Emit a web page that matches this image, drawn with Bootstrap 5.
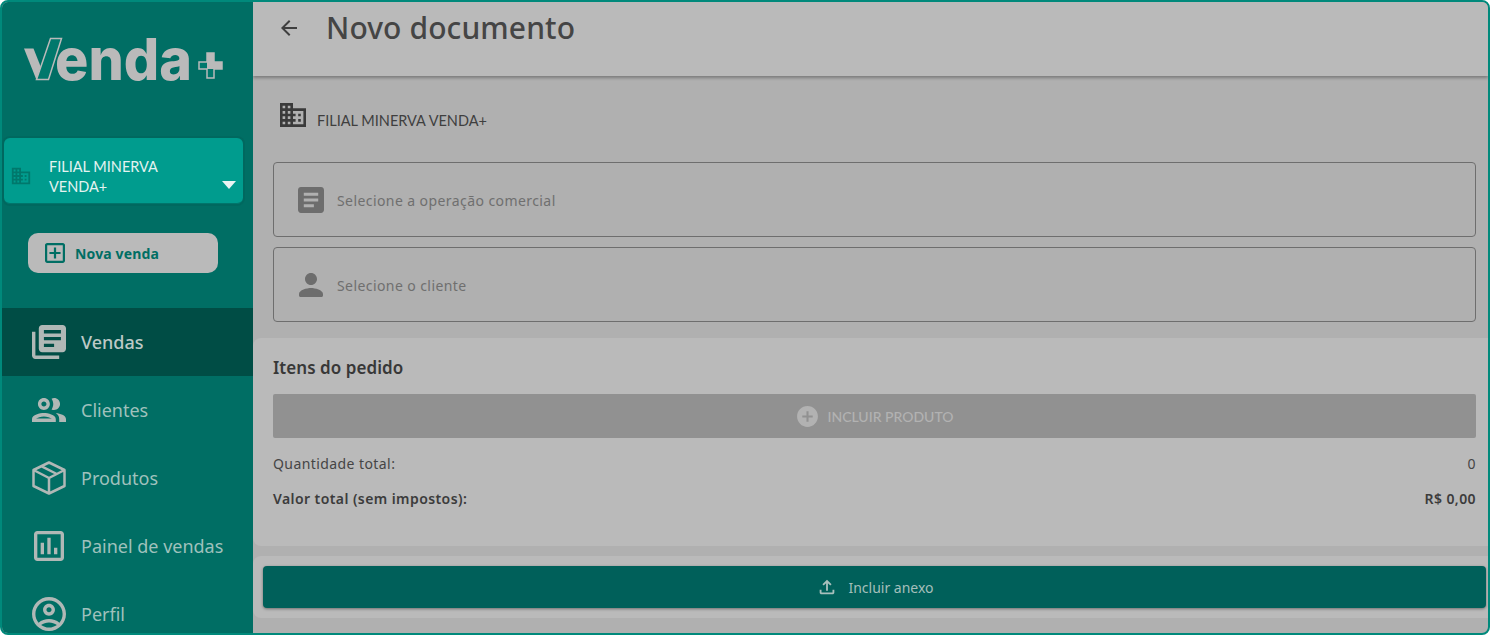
<!DOCTYPE html>
<html lang="pt-BR">
<head>
<meta charset="utf-8">
<title>Novo documento</title>
<link rel="stylesheet" href="https://cdn.jsdelivr.net/npm/bootstrap@5.3.0/dist/css/bootstrap.min.css">
<style>
html,body{height:100%;margin:0;overflow:hidden;background:#fff}
body{font-family:"Noto Sans","Open Sans",sans-serif;font-size:14px;color:#3c3c3c}
.frame{width:1490px;height:635px;border:2px solid #00897b;border-radius:8px;overflow:hidden;background:#b0b0b0}
.side{width:251px;flex:none;background:#006e64;overflow:hidden}
.logo-wrap{height:136px;padding:35px 0 0 22px}
.logo-box{width:200px;height:48px;overflow:visible}
.filial-box{margin-left:2px;width:239px;height:66px;background:#009c8e;border-radius:6px;border-bottom:1px solid #00756b;box-shadow:0 0 0 2px #00685f;padding-left:6px}
.filial-box svg{margin-top:10px;flex:none}
.filial-box .name{font-family:"Lato",sans-serif;font-size:14.5px;line-height:20px;color:#e4f3f1;width:140px;margin:12px 0 0 17px}
.caret{width:0;height:0;border:7px solid transparent;border-top:8px solid #e9f4f3;border-bottom:0;margin:28px 7px 0 auto}
.new-btn{margin:29px 0 35px 26px;width:190px;height:40px;background:#bababa;border-radius:10px;color:#006e64;font-weight:700;font-size:14px;padding-left:17px;gap:10px;letter-spacing:.15px}
.nav-row{height:68px;padding-left:30px;color:#9fc1bc;font-size:18px;gap:15px}
.nav-row.on{background:#004d45;color:#bdc9c6;font-weight:500}
.nav-row svg{width:34px;height:34px;fill:#b0b8b6;flex:none}
.page{min-width:0;overflow:hidden}
.topbar{height:74px;background:#bababa;box-shadow:0 2px 3px rgba(0,0,0,.3);padding:0 0 22px 24px;position:relative}
.topbar h1{font-size:30px;font-weight:500;margin:0 0 0 25px;color:#454545;line-height:52px;letter-spacing:.1px}
.branch{height:86px;padding:27px 0 0 27px}
.branch span{font-family:"Lato",sans-serif;font-size:14.5px;color:#3f3f3f;margin:7px 0 0 11px}
.pick{height:75px;margin:0 12px 10px 20px;border:1px solid #6e6e6e;border-radius:4px;color:#6f6f6f;padding-left:22px;gap:11px;font-size:14px;letter-spacing:.42px}
.pick span{padding-top:2px}
.pick svg{width:30px;height:30px;fill:#6d6d6d;flex:none}
.items{margin-top:16px;height:208px;background:#bababa;border-radius:8px 0 0 8px;padding:18px 12px 0 20px}
.items h2{font-size:17px;font-weight:600;margin:0;line-height:23px;color:#383838;letter-spacing:.05px}
.add-line{height:44px;margin:15px 0 14px;background:#919191;border-radius:2px;color:#b2b2b2;font-family:"Lato",sans-serif;font-size:14px;font-weight:500;gap:7px}
.sum{height:23px;margin-bottom:12px;color:#454545;letter-spacing:.42px}
.sum.fw{font-weight:600;color:#3c3c3c}
.foot{margin-top:10px;height:62px;background:#bababa;border-radius:8px 0 0 8px;padding:10px 2px 10px 10px}
.attach{height:42px;background:#00605a;border-radius:4px;color:#a4bfbb;box-shadow:0 1px 3px rgba(0,0,0,.4);font-size:14px;gap:10px}
.attach svg{width:22px;height:22px;fill:#a9c0bd;margin-left:1px}
</style>
</head>
<body>
<div class="frame d-flex">
  <aside class="side">
    <div class="logo-wrap d-flex align-items-start">
      <svg class="logo-box" viewBox="0 0 200 48" role="img" aria-label="Venda+">
        <path d="M0 11.5H9.500L18 33L14 43H12.500Z" fill="#bababa"/>
        <path d="M26.500 1.500H37.500L24.500 42.500H12.500Z" fill="#00786c" stroke="#bababa" stroke-width="1.500"/>
        <text x="31" y="43" font-family="Inter,sans-serif" font-weight="800" font-size="58" fill="#bababa" textLength="137" lengthAdjust="spacingAndGlyphs">enda</text>
        <path d="M183 16h7v9h8v7h-8v9h-7v-9h-8v-7h8z" fill="#00786c" stroke="#bababa" stroke-width="1.500"/>
        <path d="M183 16h7v9h8v7h-15z" fill="#bababa"/>
      </svg>
    </div>
    <div class="filial-box d-flex align-items-center">
      <svg width="22" height="22" viewBox="0 0 24 24" fill="#00786c"><path d="M12 7V3H2v18h20V7H12zM6 19H4v-2h2v2zm0-4H4v-2h2v2zm0-4H4V9h2v2zm0-4H4V5h2v2zm4 12H8v-2h2v2zm0-4H8v-2h2v2zm0-4H8V9h2v2zm0-4H8V5h2v2zm10 12h-8v-2h2v-2h-2v-2h2v-2h-2V9h8v10zm-2-8h-2v2h2v-2zm0 4h-2v2h2v-2z"/></svg>
      <div class="name">FILIAL MINERVA VENDA+</div>
      <div class="caret"></div>
    </div>
    <div class="new-btn d-flex align-items-center">
      <svg width="20" height="20" viewBox="3 3 18 18" fill="#006e64"><path d="M19 3H5c-1.110 0-2 .9-2 2v14c0 1.100.89 2 2 2h14c1.110 0 2-.9 2-2V5c0-1.100-.89-2-2-2zm0 16H5V5h14v14zm-8-2h2v-4h4v-2h-4V7h-2v4H7v2h4z"/></svg>
      <span>Nova venda</span>
    </div>
    <div class="nav-row on d-flex align-items-center">
      <svg viewBox="2 2 20 20"><path d="M4 6H2v14c0 1.100.9 2 2 2h14v-2H4V6zm16-4H8c-1.100 0-2 .9-2 2v12c0 1.100.9 2 2 2h12c1.100 0 2-.9 2-2V4c0-1.100-.9-2-2-2zm-1 9H9V9h10v2zm-4 4H9v-2h6v2zm4-8H9V5h10v2z"/></svg>
      <span>Vendas</span>
    </div>
    <div class="nav-row d-flex align-items-center">
      <svg viewBox="2 2 20 20"><path d="M9 13.750c-2.340 0-7 1.170-7 3.500V19h14v-1.750c0-2.330-4.660-3.500-7-3.500zM4.340 17c.84-.58 2.870-1.250 4.660-1.250s3.820.67 4.660 1.250H4.340zM9 12c1.930 0 3.500-1.570 3.500-3.500S10.930 5 9 5 5.500 6.570 5.500 8.500 7.070 12 9 12zm0-5c.83 0 1.500.67 1.500 1.500S9.830 10 9 10s-1.500-.67-1.500-1.500S8.170 7 9 7zm7.040 6.810c1.160.84 1.960 1.960 1.960 3.440V19h4v-1.750c0-2.020-3.500-3.170-5.960-3.440zM15 12c1.930 0 3.500-1.570 3.500-3.500S16.930 5 15 5c-.54 0-1.040.13-1.500.35.63.89 1 1.980 1 3.150s-.37 2.260-1 3.150c.46.22.96.35 1.500.35z"/></svg>
      <span>Clientes</span>
    </div>
    <div class="nav-row d-flex align-items-center">
      <svg viewBox="0 0 34 34"><path d="M17 1.500L32.500 9V25L17 32.500L1.500 25V9ZM1.500 9L17 17L32.500 9M17 17V32.500M9.200 5.200L24.800 13" fill="none" stroke="#b0b8b6" stroke-width="2.500" stroke-linejoin="round"/></svg>
      <span>Produtos</span>
    </div>
    <div class="nav-row d-flex align-items-center">
      <svg viewBox="1.800 1.800 20.400 20.400"><path d="M19 3H5c-1.100 0-2 .9-2 2v14c0 1.100.9 2 2 2h14c1.100 0 2-.9 2-2V5c0-1.100-.9-2-2-2zm0 16H5V5h14v14zM7 10h2v7H7zm4-3h2v10h-2zm4 6h2v4h-2z"/></svg>
      <span>Painel de vendas</span>
    </div>
    <div class="nav-row d-flex align-items-center">
      <svg viewBox="2 2 20 20"><path d="M12 2C6.480 2 2 6.480 2 12s4.480 10 10 10 10-4.480 10-10S17.520 2 12 2zM7.350 18.500C8.660 17.560 10.260 17 12 17s3.340.56 4.650 1.500c-1.310.94-2.910 1.500-4.650 1.500s-3.340-.56-4.650-1.500zm10.790-1.380C16.450 15.800 14.320 15 12 15s-4.450.8-6.140 2.120C4.700 15.730 4 13.950 4 12c0-4.420 3.580-8 8-8s8 3.580 8 8c0 1.950-.7 3.730-1.860 5.120zM12 6c-1.930 0-3.500 1.570-3.500 3.500S10.070 13 12 13s3.500-1.570 3.500-3.500S13.930 6 12 6zm0 5c-.83 0-1.500-.67-1.500-1.500S11.170 8 12 8s1.500.67 1.500 1.500S12.830 11 12 11z"/></svg>
      <span>Perfil</span>
    </div>
  </aside>
  <main class="page flex-grow-1">
    <header class="topbar d-flex align-items-center">
      <svg width="24" height="24" viewBox="0 0 24 24" fill="#3f3f3f"><path d="M20 11H7.830l5.590-5.590L12 4l-8 8 8 8 1.410-1.410L7.830 13H20v-2z"/></svg>
      <h1>Novo documento</h1>
    </header>
    <div class="branch d-flex align-items-start">
      <svg width="26" height="24" viewBox="2 3 20 18" preserveAspectRatio="none" fill="#3a3a3a"><path d="M12 7V3H2v18h20V7H12zM6 19H4v-2h2v2zm0-4H4v-2h2v2zm0-4H4V9h2v2zm0-4H4V5h2v2zm4 12H8v-2h2v2zm0-4H8v-2h2v2zm0-4H8V9h2v2zm0-4H8V5h2v2zm10 12h-8v-2h2v-2h-2v-2h2v-2h-2V9h8v10zm-2-8h-2v2h2v-2zm0 4h-2v2h2v-2z"/></svg>
      <span>FILIAL MINERVA VENDA+</span>
    </div>
    <div class="pick d-flex align-items-center">
      <svg viewBox="1.600 1.600 20.800 20.800"><path d="M19 3H5c-1.100 0-2 .9-2 2v14c0 1.100.9 2 2 2h14c1.100 0 2-.9 2-2V5c0-1.100-.9-2-2-2zm-5 14H7v-2h7v2zm3-4H7v-2h10v2zm0-4H7V7h10v2z"/></svg>
      <span>Selecione a operação comercial</span>
    </div>
    <div class="pick d-flex align-items-center">
      <svg viewBox="2 2 20 20"><path d="M12 12c2.210 0 4-1.790 4-4s-1.790-4-4-4-4 1.790-4 4 1.790 4 4 4zm0 2c-2.670 0-8 1.340-8 4v1c0 .55.45 1 1 1h14c.55 0 1-.45 1-1v-1c0-2.660-5.330-4-8-4z"/></svg>
      <span>Selecione o cliente</span>
    </div>
    <section class="items">
      <h2>Itens do pedido</h2>
      <div class="add-line d-flex align-items-center justify-content-center">
        <svg width="25" height="25" viewBox="0 0 24 24" fill="#b2b2b2"><path fill-rule="evenodd" d="M12 2C6.480 2 2 6.480 2 12s4.480 10 10 10 10-4.480 10-10S17.520 2 12 2zm5 11h-4v4h-2v-4H7v-2h4V7h2v4h4v2z"/></svg>
        <span>INCLUIR PRODUTO</span>
      </div>
      <div class="sum d-flex justify-content-between align-items-center"><span>Quantidade total:</span><span>0</span></div>
      <div class="sum fw d-flex justify-content-between align-items-center"><span>Valor total (sem impostos):</span><span>R$ 0,00</span></div>
    </section>
    <div class="foot">
      <div class="attach d-flex align-items-center justify-content-center">
        <svg viewBox="0 0 24 24"><path d="M18 15v3H6v-3H4v3c0 1.100.9 2 2 2h12c1.100 0 2-.9 2-2v-3h-2zM7 9l1.410 1.410L11 7.830V16h2V7.830l2.590 2.580L17 9l-5-5-5 5z"/></svg>
        <span>Incluir anexo</span>
      </div>
    </div>
  </main>
</div>
<script src="https://cdn.jsdelivr.net/npm/bootstrap@5.3.0/dist/js/bootstrap.bundle.min.js"></script>
</body>
</html>
